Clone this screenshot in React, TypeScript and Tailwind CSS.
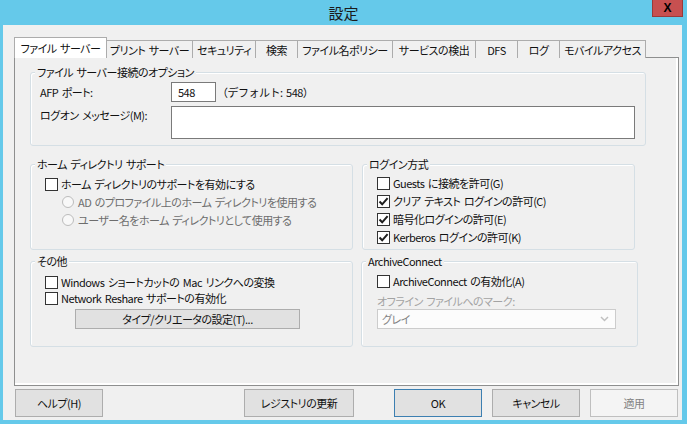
import type { ReactNode } from "react";

const tabs = [
  { label: "プリント サーバー", w: "w-[86px]" },
  { label: "セキュリティ", w: "w-[63px]" },
  { label: "検索", w: "w-[42px]" },
  { label: "ファイル名ポリシー", w: "w-[95px]" },
  { label: "サービスの検出", w: "w-[83px]" },
  { label: "DFS", w: "w-[42px]" },
  { label: "ログ", w: "w-[42px]" },
  { label: "モバイルアクセス", w: "w-[86px]" },
];

function Box({ checked }: { checked?: boolean }) {
  return (
    <span className="w-[13px] h-[13px] border border-[#333333] bg-white flex items-center justify-center shrink-0">
      {checked && (
        <svg width="11" height="11" viewBox="0 0 11 11">
          <path d="M1.5 5.5 L4.2 8.3 L9.6 2.2" fill="none" stroke="#1e1e1e" strokeWidth="2" />
        </svg>
      )}
    </span>
  );
}

function Radio() {
  return <span className="w-[12px] h-[12px] rounded-full border border-[#bcbcbc] bg-[#f8f8f8] shrink-0" />;
}

function Group({ title, className, children }: { title: string; className: string; children: ReactNode }) {
  return (
    <div className={`border border-[#d5dfe5] rounded-[3px] shadow-[inset_1px_1px_0_#ffffff] ${className}`}>
      <div className="-mt-[9px] ml-[4px] px-[2px] w-fit bg-[#f0f0f0] leading-[16px]">{title}</div>
      {children}
    </div>
  );
}

function Btn({ children, className = "" }: { children: ReactNode; className?: string }) {
  return (
    <div className={`h-[28px] flex items-center justify-center border ${className}`}>{children}</div>
  );
}

export default function App() {
  return (
    <div className="w-[687px] h-[424px] bg-[#65c9ea] flex flex-col overflow-hidden text-[11px] leading-[16px] tracking-[-0.5px] [word-spacing:1.5px] text-[#111111] font-['Noto_Sans_CJK_JP',sans-serif] [font-feature-settings:'palt']">
      <div className="relative h-[25px] flex items-center justify-center text-[15px] tracking-normal text-[#1b1b1b]">
        設定
        <div className="absolute right-[4px] top-0 w-[31px] h-[17px] bg-[#c75050] border border-t-0 border-[#9a3a3a] flex items-center justify-center text-[12px] font-bold text-black font-['Liberation_Sans',sans-serif]">
          X
        </div>
      </div>

      <div className="ml-[3px] w-[679px] h-[395px] bg-[#f0f0f0] pt-[12px] pl-[11px]">
        {/* tabs */}
        <div className="flex items-end h-[21px]">
          <div className="w-[93px] h-[21px] bg-white border border-b-0 border-[#acacac] relative z-10 flex items-center justify-center whitespace-nowrap">
            ファイル サーバー
          </div>
          {tabs.map((t) => (
            <div key={t.label} className={`${t.w} h-[18px] border-t border-r border-[#acacac] bg-[#f0f0f0] flex items-center justify-center whitespace-nowrap`}>
              {t.label}
            </div>
          ))}
        </div>

        {/* tab page */}
        <div className="-mt-[1px] w-[665px] h-[329px] border border-[#8e8f8f] bg-[#f0f0f0] shadow-[inset_-2px_-2px_0_#ffffff] pl-[15px] pt-[14px]">
          <Group title="ファイル サーバー接続のオプション" className="w-[616px] h-[74px]">
            <div className="mt-[2px] pl-[9px] flex items-center h-[20px]">
              <div className="w-[131px]">AFP ポート:</div>
              <div className="w-[45px] h-[20px] border border-[#7a7a7a] bg-white pl-[6px] flex items-center">548</div>
              <div className="ml-[1px] [font-feature-settings:normal]">（デフォルト: 548）</div>
            </div>
            <div className="mt-[4px] pl-[9px] flex items-start">
              <div className="w-[131px] mt-[1px]">ログオン メッセージ(M):</div>
              <div className="w-[464px] h-[33px] border border-[#7a7a7a] bg-white" />
            </div>
          </Group>

          <div className="mt-[18px] flex gap-[9px]">
            <Group title="ホーム ディレクトリ サポート" className="w-[323px] h-[86px]">
              <div className="mt-[3px] pl-[14px] h-[18px] flex items-center gap-[3px]">
                <Box />
                <span>ホーム ディレクトリのサポートを有効にする</span>
              </div>
              <div className="pl-[31px] h-[18px] flex items-center gap-[4px] text-[#6d6d6d]">
                <Radio />
                <span>AD のプロファイル上のホーム ディレクトリを使用する</span>
              </div>
              <div className="pl-[31px] h-[18px] flex items-center gap-[4px] text-[#6d6d6d]">
                <Radio />
                <span>ユーザー名をホーム ディレクトリとして使用する</span>
              </div>
            </Group>
            <Group title="ログイン方式" className="w-[273px] h-[86px]">
              <div className="mt-[2px] pl-[14px]">
                {[
                  { l: "Guests に接続を許可(G)", c: false },
                  { l: "クリア テキスト ログインの許可(C)", c: true },
                  { l: "暗号化ログインの許可(E)", c: true },
                  { l: "Kerberos ログインの許可(K)", c: true },
                ].map((r) => (
                  <div key={r.l} className="h-[18px] flex items-center gap-[3px]">
                    <Box checked={r.c} />
                    <span>{r.l}</span>
                  </div>
                ))}
              </div>
            </Group>
          </div>

          <div className="mt-[11px] flex gap-[8px]">
            <Group title="その他" className="w-[323px] h-[86px]">
              <div className="mt-[5px] pl-[14px]">
                <div className="h-[16px] flex items-center gap-[3px]">
                  <Box />
                  <span>Windows ショートカットの Mac リンクへの変換</span>
                </div>
                <div className="h-[16px] flex items-center gap-[3px]">
                  <Box />
                  <span>Network Reshare サポートの有効化</span>
                </div>
              </div>
              <div className="mt-[3px] ml-[44px] w-[225px] h-[20px] bg-[#e1e1e1] border border-[#adadad] flex items-center justify-center">
                タイプ/クリエータの設定(T)...
              </div>
            </Group>
            <Group title="ArchiveConnect" className="w-[277px] h-[86px]">
              <div className="mt-[4px] pl-[15px] h-[16px] flex items-center gap-[3px]">
                <Box />
                <span>ArchiveConnect の有効化(A)</span>
              </div>
              <div className="mt-[4px] pl-[15px] h-[16px] flex items-center text-[#a3a3a3]">
                オフライン ファイルへのマーク:
              </div>
              <div className="ml-[15px] w-[239px] h-[20px] border border-[#cccccc] bg-[#fcfcfc] flex items-center justify-between pl-[4px] pr-[6px] text-[#838383]">
                <span>グレイ</span>
                <svg width="9" height="6" viewBox="0 0 9 6">
                  <path d="M1 1 L4.5 4.5 L8 1" fill="none" stroke="#c0c0c0" strokeWidth="1.5" />
                </svg>
              </div>
            </Group>
          </div>
        </div>

        {/* bottom buttons */}
        <div className="mt-[3px] flex">
          <Btn className="ml-[1px] w-[88px] bg-[#e1e1e1] border-[#adadad]">ヘルプ(H)</Btn>
          <Btn className="ml-[141px] w-[110px] bg-[#e1e1e1] border-[#adadad]">レジストリの更新</Btn>
          <Btn className="ml-[40px] w-[88px] bg-[#e1e1e1] border-[#3c7fb1]">OK</Btn>
          <Btn className="ml-[10px] w-[88px] bg-[#e1e1e1] border-[#adadad]">キャンセル</Btn>
          <Btn className="ml-[10px] w-[88px] bg-[#f4f4f4] border-[#bfbfbf] text-[#838383]">適用</Btn>
        </div>
      </div>
    </div>
  );
}
